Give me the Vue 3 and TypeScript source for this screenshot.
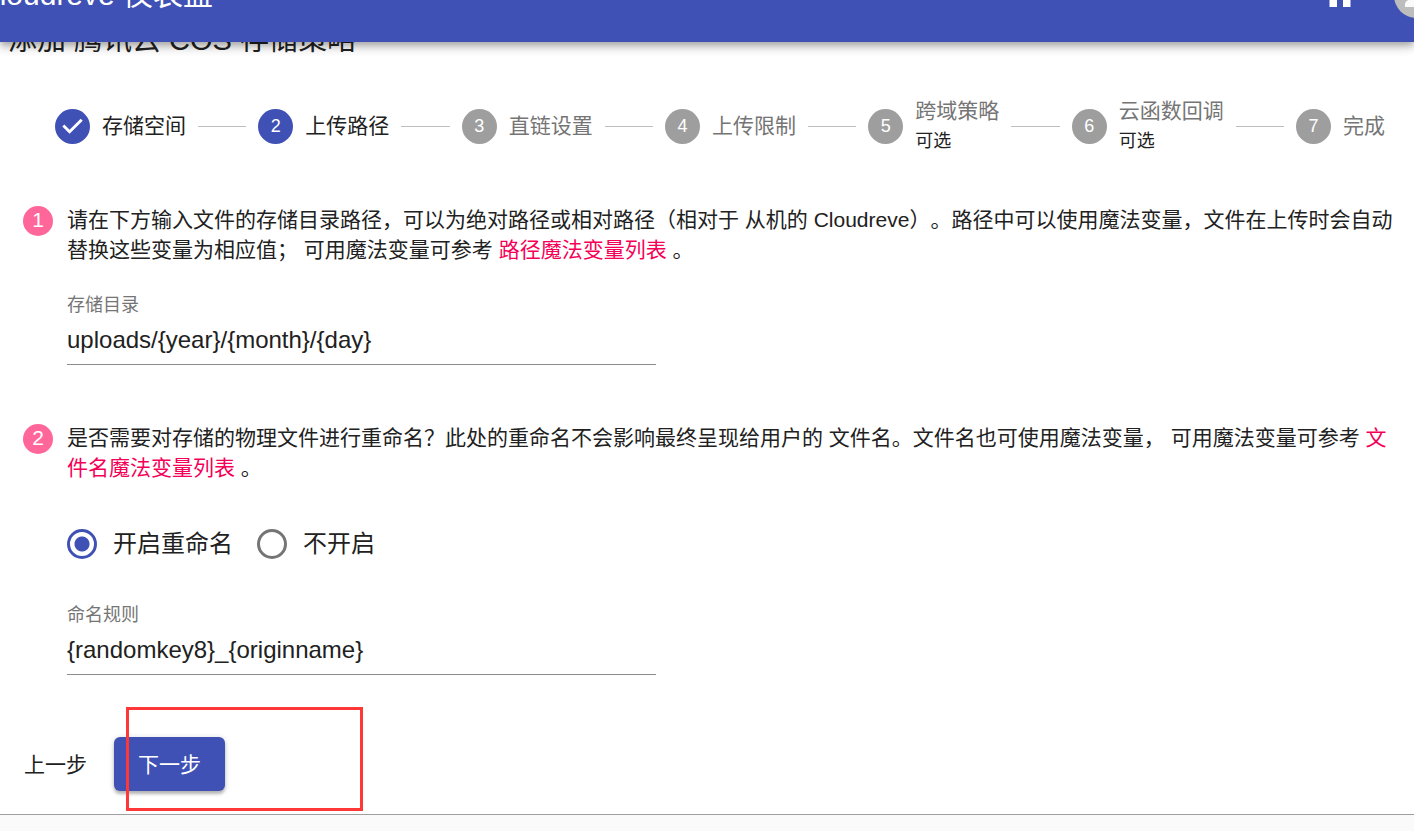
<script setup lang="ts">
import { ref } from 'vue'

interface Step {
  label: string
  state: 'done' | 'active' | 'todo'
  optional?: boolean
}

const steps: Step[] = [
  { label: '存储空间', state: 'done' },
  { label: '上传路径', state: 'active' },
  { label: '直链设置', state: 'todo' },
  { label: '上传限制', state: 'todo' },
  { label: '跨域策略', state: 'todo', optional: true },
  { label: '云函数回调', state: 'todo', optional: true },
  { label: '完成', state: 'todo' },
]

const directory = ref('uploads/{year}/{month}/{day}')
const rename = ref('on')
const rule = ref('{randomkey8}_{originname}')
</script>

<template>
  <div class="page">
    <header class="app-bar">
      <div class="toolbar">
        <span class="brand">Cloudreve 仪表盘</span>
        <button class="icon-button" type="button" aria-label="主页">
          <svg viewBox="0 0 24 24" class="home"><path d="M10 20v-6h4v6h5v-8h3L12 3 2 12h3v8z" /></svg>
        </button>
        <button class="avatar" type="button" aria-label="用户">
          <svg viewBox="0 0 24 24" class="person"><path d="M12 12c2.21 0 4-1.79 4-4s-1.79-4-4-4-4 1.79-4 4 1.79 4 4 4zm0 2c-2.67 0-8 1.34-8 4v2h16v-2c0-2.66-5.33-4-8-4z" /></svg>
        </button>
      </div>
    </header>

    <main class="paper">
      <h1 class="title">添加 腾讯云 COS 存储策略</h1>

      <ol class="stepper">
        <template v-for="(step, i) in steps" :key="step.label">
          <li v-if="i > 0" class="connector" aria-hidden="true"></li>
          <li class="step" :class="step.state">
            <svg v-if="step.state === 'done'" class="check" viewBox="0 0 24 24"><path d="M12 0a12 12 0 1 0 0 24 12 12 0 0 0 0-24zm-2 17l-5-5 1.4-1.4 3.6 3.6 7.6-7.6L19 8l-9 9z" /></svg>
            <span v-else class="dot">{{ i + 1 }}</span>
            <span class="step-text">
              <span class="step-label">{{ step.label }}</span>
              <span v-if="step.optional" class="optional">可选</span>
            </span>
          </li>
        </template>
      </ol>

      <form class="form" @submit.prevent>
        <section class="group">
          <span class="badge">1</span>
          <div class="content">
            <p class="text">请在下方输入文件的存储目录路径，可以为绝对路径或相对路径（相对于 从机的 Cloudreve）。路径中可以使用魔法变量，文件在上传时会自动替换这些变量为相应值； 可用魔法变量可参考 <a href="#">路径魔法变量列表</a> 。</p>
            <div class="field first">
              <label for="directory">存储目录</label>
              <input id="directory" v-model="directory" type="text" />
            </div>
          </div>
        </section>

        <section class="group">
          <span class="badge">2</span>
          <div class="content">
            <p class="text">是否需要对存储的物理文件进行重命名？此处的重命名不会影响最终呈现给用户的 文件名。文件名也可使用魔法变量， 可用魔法变量可参考 <a href="#">文件名魔法变量列表</a> 。</p>
            <div class="radios">
              <label><input v-model="rename" type="radio" name="rename" value="on" />开启重命名</label>
              <label><input v-model="rename" type="radio" name="rename" value="off" />不开启</label>
            </div>
            <div class="field">
              <label for="rule">命名规则</label>
              <input id="rule" v-model="rule" type="text" />
            </div>
          </div>
        </section>

        <div class="actions">
          <button type="button" class="back">上一步</button>
          <button type="submit" class="next">下一步</button>
          <span class="highlight" aria-hidden="true"></span>
        </div>
      </form>
    </main>
  </div>
</template>

<style>
body {
  background: #fafafa;
}
</style>

<style scoped>
.page {
  font-family: "Liberation Sans", "Noto Sans CJK SC", sans-serif;
  color: #212121;
  text-spacing-trim: space-all;
}
button,
input {
  font-family: inherit;
  color: inherit;
  margin: 0;
}
.app-bar {
  position: relative;
  z-index: 1;
  height: 42px;
  overflow: hidden;
  background: #3f51b5;
  color: #fff;
  box-shadow: 0 3px 6px -1px rgba(0, 0, 0, 0.2), 0 6px 8px rgba(0, 0, 0, 0.14), 0 2px 15px rgba(0, 0, 0, 0.12);
}
.toolbar {
  display: flex;
  align-items: center;
  height: 96px;
  margin: -53px -25px 0 -22px;
}
.brand {
  flex: 1;
  font-size: 30px;
  line-height: 48px;
  white-space: nowrap;
}
.icon-button,
.avatar {
  display: flex;
  align-items: center;
  justify-content: center;
  flex: none;
  border: 0;
  padding: 0;
  background: none;
  color: #fff;
}
.icon-button {
  margin-right: 36px;
}
.home,
.person {
  width: 36px;
  height: 36px;
  fill: currentColor;
}
.avatar {
  width: 45px;
  height: 45px;
  border-radius: 50%;
  background: #bdbdbd;
  color: #fafafa;
}
.paper {
  display: flow-root;
  padding-bottom: 23px;
  border-bottom: 1px solid #9e9e9e;
  background: #fff;
  box-shadow: 0 1px 2px rgba(0, 0, 0, 0.3);
}
.title {
  margin: -26px 0 0 8px;
  font-size: 29px;
  font-weight: 400;
  line-height: 48px;
}
.stepper {
  display: flex;
  align-items: center;
  gap: 12px;
  height: 60px;
  margin: 32px 29px 0 55px;
  padding: 0;
  list-style: none;
}
.step {
  display: flex;
  align-items: center;
  gap: 12px;
  flex: none;
}
.connector {
  flex: 1;
  height: 1px;
  background: #bdbdbd;
}
.check {
  width: 35px;
  height: 35px;
  fill: #3f51b5;
}
.dot {
  width: 35px;
  height: 35px;
  border-radius: 50%;
  background: #9e9e9e;
  color: #fff;
  font-size: 18px;
  line-height: 35px;
  text-align: center;
}
.active .dot {
  background: #3f51b5;
}
.step-text {
  display: flex;
  flex-direction: column;
}
.step-label {
  font-size: 21px;
  line-height: 30px;
}
.todo .step-label {
  color: #757575;
}
.optional {
  font-size: 18px;
  line-height: 30px;
}
.form {
  margin-top: 49px;
}
.group {
  display: flex;
  align-items: flex-start;
  gap: 14px;
  padding: 0 8px 0 23px;
}
.group + .group {
  margin-top: 58px;
}
.badge {
  flex: none;
  width: 30px;
  height: 30px;
  margin-top: 1px;
  border-radius: 50%;
  background: #ff6699;
  color: #fff;
  font-size: 21px;
  line-height: 28px;
  text-align: center;
}
.content {
  flex: 1;
}
.text {
  margin: 0;
  font-size: 21px;
  line-height: 30px;
}
.text a {
  color: #f50057;
  text-decoration: none;
}
.field {
  display: flex;
  flex-direction: column;
  width: 44%;
  min-width: 300px;
  margin-top: 41px;
}
.field.first {
  margin-top: 25px;
}
.field label {
  color: #757575;
  font-size: 18px;
  line-height: 30px;
}
.field input {
  border: 0;
  border-bottom: 1px solid #8c8c8c;
  padding: 0 0 4px;
  height: 45px;
  box-sizing: border-box;
  background: none;
  font-size: 24px;
  outline: 0;
}
.radios {
  display: flex;
  gap: 24px;
  margin-top: 46px;
}
.radios label {
  display: flex;
  align-items: center;
  gap: 16px;
  font-size: 24px;
  line-height: 30px;
}
.radios input {
  appearance: none;
  width: 30px;
  height: 30px;
  border: 3px solid #757575;
  border-radius: 50%;
}
.radios input:checked {
  border-color: #3f51b5;
  background: radial-gradient(circle, #3f51b5 7px, transparent 8px);
}
.actions {
  position: relative;
  display: flex;
  margin-top: 62px;
}
.actions button {
  height: 54px;
  padding: 0 24px 2px;
  border: 0;
  border-radius: 6px;
  background: none;
  font-size: 21px;
}
.actions .back {
  margin-right: 3px;
}
.actions .next {
  background: #3f51b5;
  color: #fff;
  box-shadow: 0 3px 3px rgba(0, 0, 0, 0.22), 0 1px 6px rgba(0, 0, 0, 0.16);
}
.highlight {
  position: absolute;
  left: 126px;
  top: -30px;
  width: 237px;
  height: 104px;
  box-sizing: border-box;
  border: 3px solid #ff3737;
  pointer-events: none;
}
</style>
